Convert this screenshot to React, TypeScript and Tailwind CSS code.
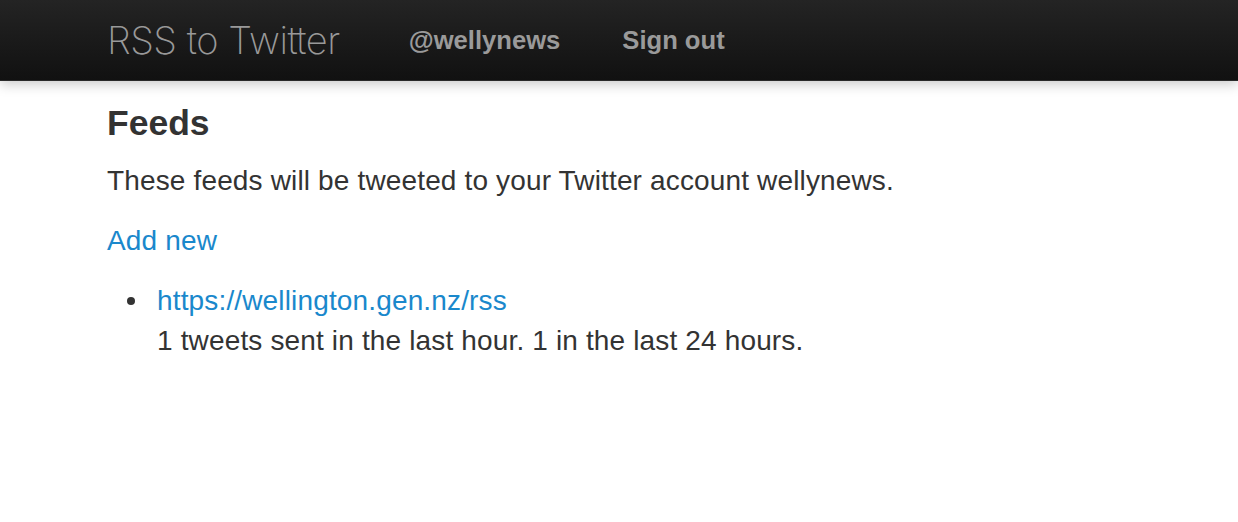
export default function App() {
  const font = { fontFamily: '"Liberation Sans", Arial, sans-serif' };

  return (
    <div className="min-h-[522px] bg-white text-[#333]" style={font}>
      <header className="h-[81px] bg-gradient-to-b from-[#242424] to-[#111] border-b border-[#2a2a2a] shadow-[0_3px_12px_rgba(0,0,0,0.22)] relative z-10">
        <div className="flex items-center h-full pl-[107px]">
          <a
            href="#"
            className="text-[38px] font-extralight tracking-[-0.5px] text-[#999] leading-none"
            style={{ fontFamily: 'Inter, "Liberation Sans", sans-serif' }}
          >
            RSS to Twitter
          </a>
          <nav className="flex items-center ml-[69px] gap-[62px] text-[25.6px] font-bold text-[#9a9a9a] pt-[1px]">
            <a href="#">@wellynews</a>
            <a href="#">Sign out</a>
          </nav>
        </div>
      </header>

      <main className="pl-[107px] pt-[22px] text-[28px] tracking-[0.15px] leading-[40px]">
        <h2 className="text-[35.5px] font-bold leading-[40px] tracking-normal">Feeds</h2>
        <p className="mt-[18px]">These feeds will be tweeted to your Twitter account wellynews.</p>
        <p className="mt-[20px]">
          <a href="#" className="text-[#1a88cc]">Add new</a>
        </p>
        <ul className="mt-[20px] pl-[50px]">
          <li className="relative">
            <span className="absolute left-[-30px] top-[16px] w-[8px] h-[8px] rounded-full bg-[#333]" />
            <a href="#" className="text-[#1a88cc]">https://wellington.gen.nz/rss</a>
            <br />
            1 tweets sent in the last hour. 1 in the last 24 hours.
          </li>
        </ul>
      </main>
    </div>
  );
}
